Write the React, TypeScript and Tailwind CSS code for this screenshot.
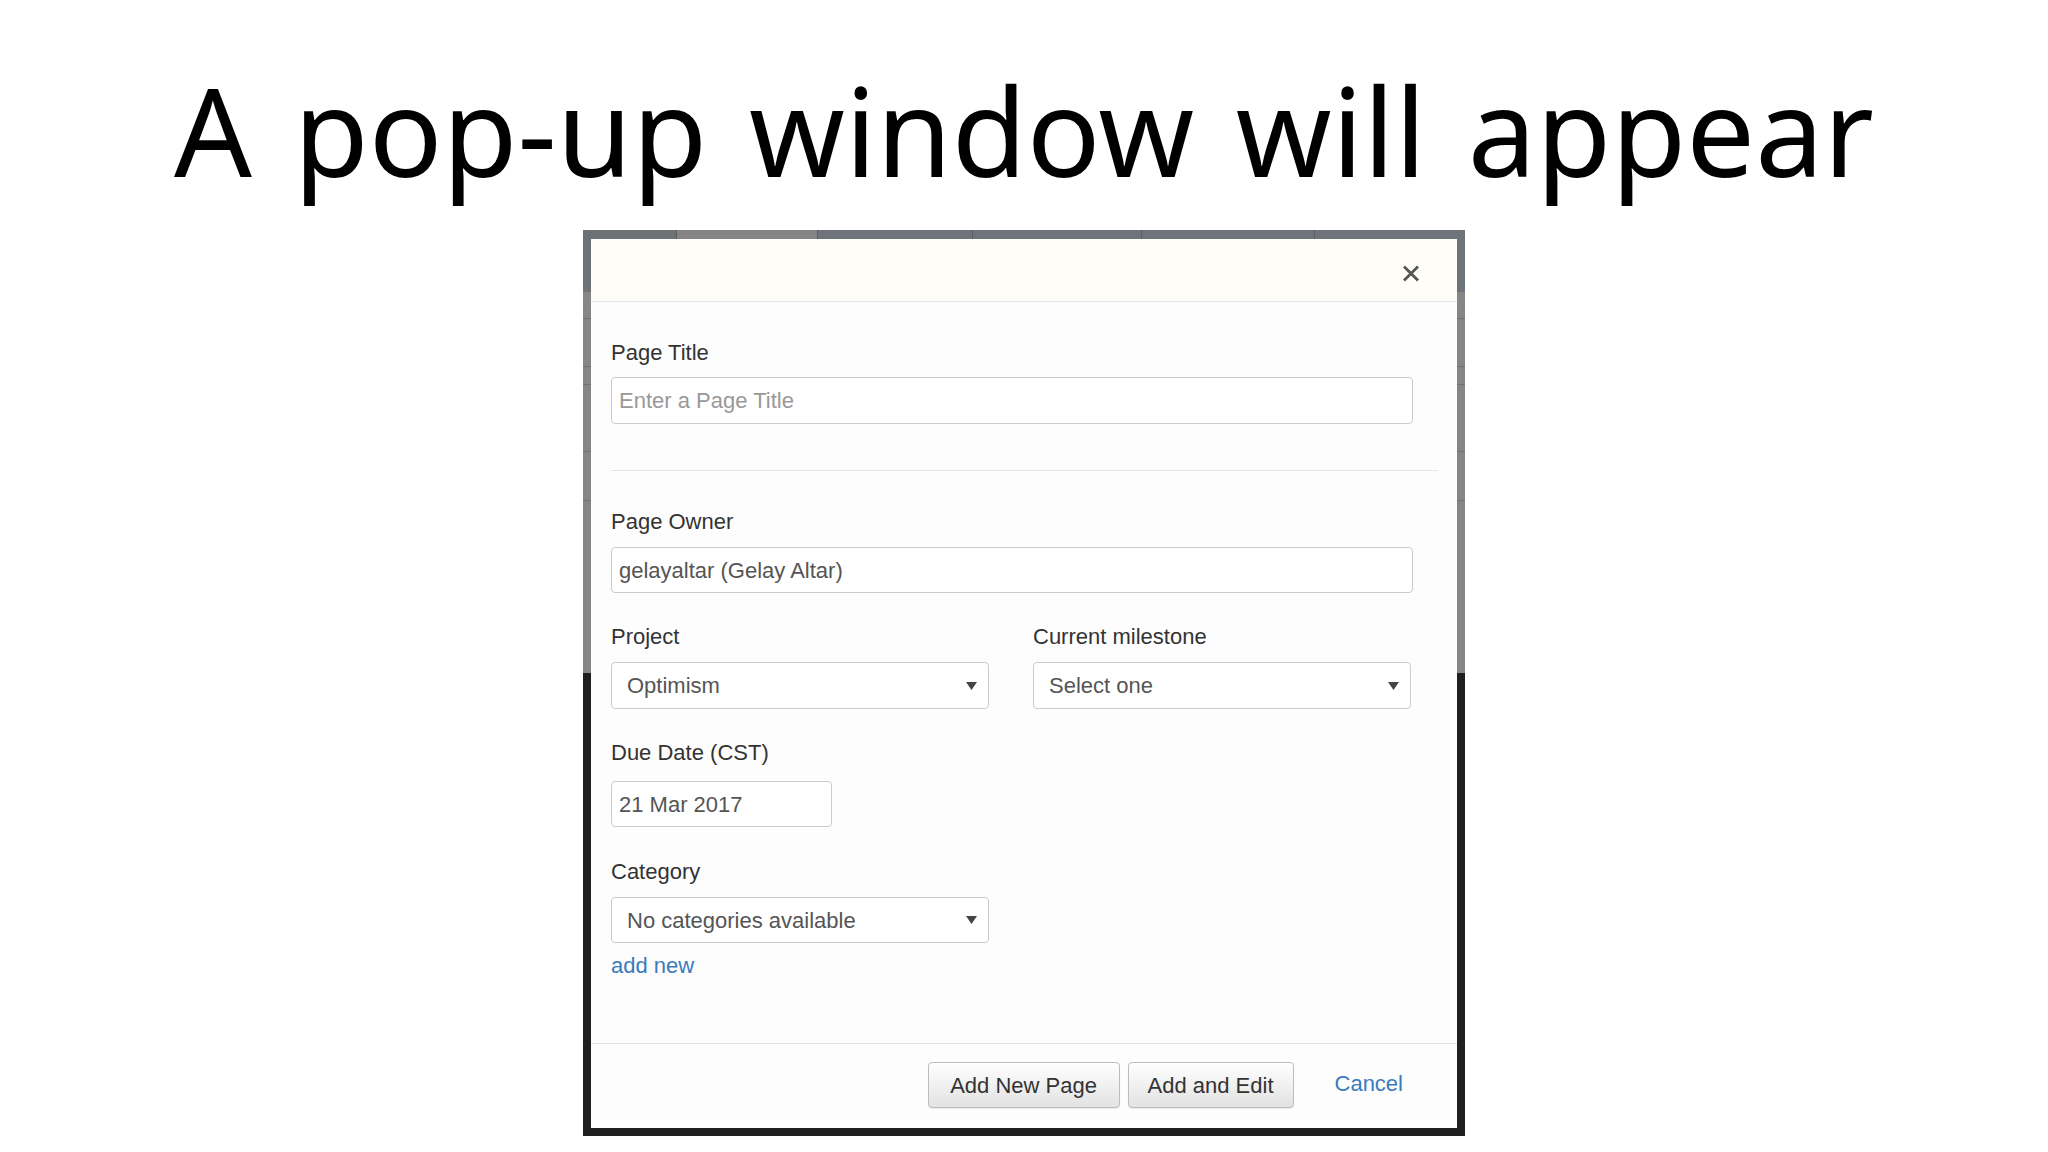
import React from "react";

function Caret() {
  return (
    <svg width="11" height="8" viewBox="0 0 11 8" className="shrink-0">
      <path d="M0 0H11L5.5 8Z" fill="#444" />
    </svg>
  );
}

function CloseIcon() {
  return (
    <svg width="18" height="17" viewBox="0 0 18 17">
      <path d="M2 1.5L16 15.5M16 1.5L2 15.5" stroke="#555" strokeWidth="2.8" />
    </svg>
  );
}

function Label({ children }: { children: React.ReactNode }) {
  return <div className="h-[30px] leading-[30px] text-[#333]">{children}</div>;
}

function SelectBox({ value, className }: { value: string; className: string }) {
  return (
    <div
      className={`flex items-center justify-between w-[378px] border border-[#ccc] rounded-[4px] bg-white pl-[15px] pr-[11px] text-[#555] ${className}`}
    >
      <span>{value}</span>
      <Caret />
    </div>
  );
}

function TextBox({
  value,
  placeholder,
  className,
}: {
  value?: string;
  placeholder?: string;
  className: string;
}) {
  return (
    <div
      className={`flex items-center border border-[#ccc] rounded-[4px] bg-white pl-[7px] ${className}`}
    >
      {value ? (
        <span className="text-[#555]">{value}</span>
      ) : (
        <span className="text-[#999]">{placeholder}</span>
      )}
    </div>
  );
}

function Backdrop() {
  return (
    <div className="absolute inset-0 flex flex-col">
      {/* top navigation strip of the page underneath */}
      <div className="h-[62px] flex bg-[#6c7176]">
        <div className="w-[94px] bg-[#6d7374] border-r border-[#5a5e60]" />
        <div className="w-[141px] bg-[#848484] border-r border-[#5a5e60]" />
        <div className="w-[155px] bg-[#6f747a] border-r border-[#5a5e60]" />
        <div className="w-[169px] bg-[#6f747a] border-r border-[#5a5e60]" />
        <div className="w-[173px] bg-[#6f747a] border-r border-[#5a5e60]" />
        <div className="flex-1 bg-[#6f747a]" />
      </div>
      {/* page rows of the dimmed content */}
      <div className="h-[381px] relative bg-[#868686]">
        <div className="absolute left-0 right-0 top-[26px] h-px bg-[#707070]" />
        <div className="absolute left-0 right-0 top-[74px] h-px bg-[#707070]" />
        <div className="absolute left-0 right-0 top-[92px] h-px bg-[#707070]" />
        <div className="absolute left-0 right-0 top-[159px] h-px bg-[#707070]" />
        <div className="absolute left-0 right-0 top-[208px] h-px bg-[#707070]" />
      </div>
      <div className="flex-1 bg-[#1f1f1f]" />
    </div>
  );
}

export default function App() {
  return (
    <div className="w-[2048px] h-[1152px] bg-white flex flex-col items-center font-['Liberation_Sans',Arial,sans-serif] text-[22px] overflow-hidden">
      <h1 className="pt-[69px] text-[122px] leading-none font-['Noto_Sans',sans-serif] font-normal text-black whitespace-nowrap [word-spacing:10px]">
        A pop-up window will appear
      </h1>

      <div className="mt-[39px] relative w-[882px] h-[906px] pt-[9px] px-[8px] pb-[8px]">
        <Backdrop />

        <div className="relative h-full flex flex-col bg-[#fdfdfd]">
          {/* header */}
          <div className="h-[63px] shrink-0 flex items-center justify-end pr-[37px] pt-[6px] bg-[#fffdf8] border-b border-[#e6e6e6]">
            <CloseIcon />
          </div>

          {/* body */}
          <div className="flex-1 flex flex-col pt-[36px] pl-[20px] pr-[19px]">
            <Label>Page Title</Label>
            <TextBox placeholder="Enter a Page Title" className="mt-[9px] h-[47px] w-[802px]" />

            <div className="mt-[46px] h-px w-full bg-[#e5e5e5]" />

            <div className="mt-[36px]">
              <Label>Page Owner</Label>
            </div>
            <TextBox value="gelayaltar (Gelay Altar)" className="mt-[10px] h-[46px] w-[802px]" />

            <div className="mt-[29px] flex gap-[44px]">
              <div className="flex flex-col">
                <Label>Project</Label>
                <SelectBox value="Optimism" className="mt-[10px] h-[47px]" />
              </div>
              <div className="flex flex-col">
                <Label>Current milestone</Label>
                <SelectBox value="Select one" className="mt-[10px] h-[47px]" />
              </div>
            </div>

            <div className="mt-[29px]">
              <Label>Due Date (CST)</Label>
            </div>
            <TextBox value="21 Mar 2017" className="mt-[13px] h-[46px] w-[221px]" />

            <div className="mt-[30px]">
              <Label>Category</Label>
            </div>
            <SelectBox value="No categories available" className="mt-[10px] h-[46px]" />
            <div className="mt-[8px] h-[30px] leading-[30px] text-[#3a7bbd]">add new</div>
          </div>

          {/* footer */}
          <div className="h-[85px] shrink-0 border-t border-[#e5e5e5] flex items-start justify-end pt-[18px] pr-[54px]">
            <div className="w-[192px] h-[46px] flex items-center justify-center rounded-[4px] border border-[#bcbcbc] bg-linear-to-b from-white to-[#e2e2e2] text-[#333] shadow-[0_1px_1px_rgba(0,0,0,0.08)]">
              Add New Page
            </div>
            <div className="ml-[8px] w-[166px] h-[46px] flex items-center justify-center rounded-[4px] border border-[#bcbcbc] bg-linear-to-b from-white to-[#e2e2e2] text-[#333] shadow-[0_1px_1px_rgba(0,0,0,0.08)]">
              Add and Edit
            </div>
            <div className="ml-[41px] h-[46px] flex items-center text-[#3a7bbd] pb-[3px]">Cancel</div>
          </div>
        </div>
      </div>
    </div>
  );
}
